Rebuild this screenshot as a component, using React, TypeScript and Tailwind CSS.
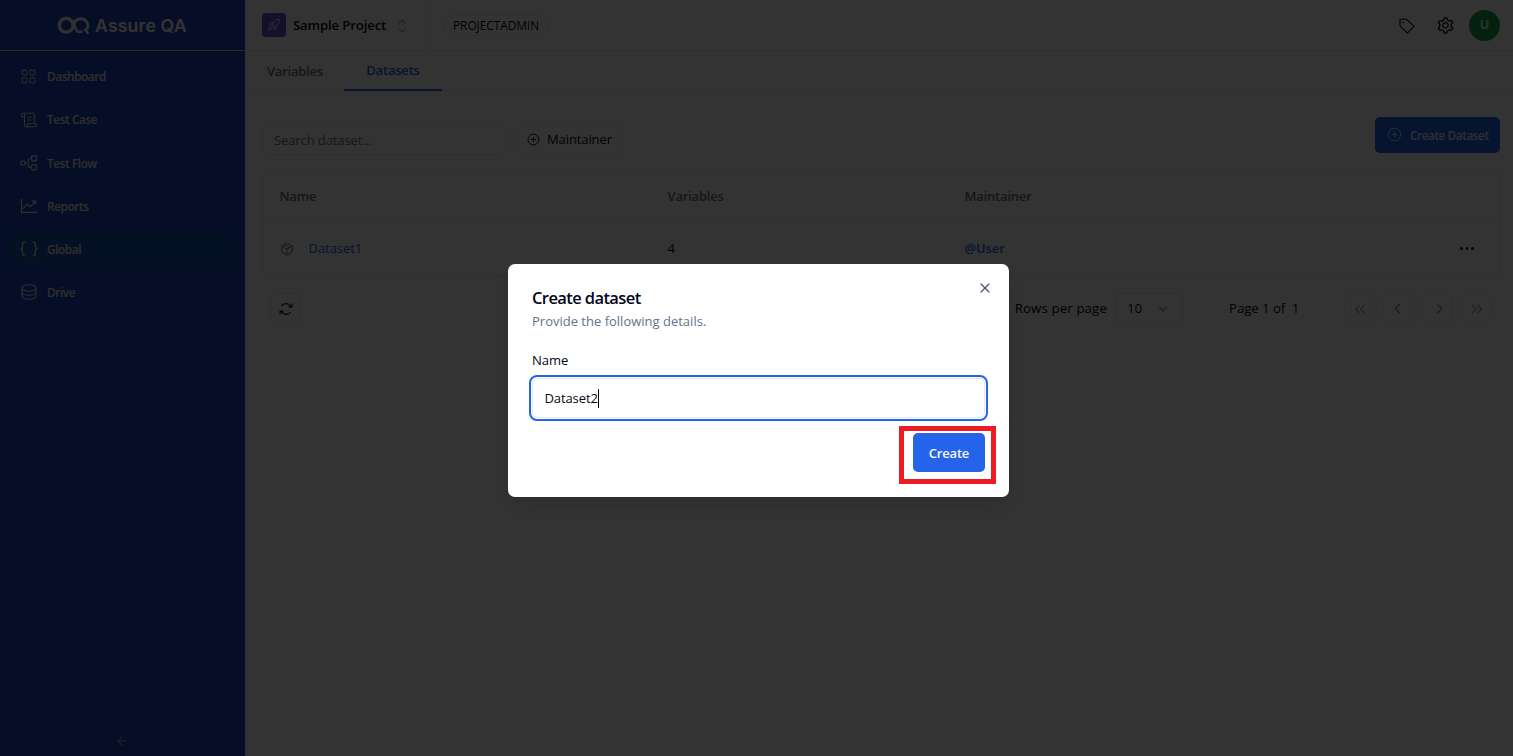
import type { ReactNode, SVGProps } from "react";
import {
  ArrowLeft,
  ChevronDown,
  ChevronLeft,
  ChevronRight,
  ChevronsLeft,
  ChevronsRight,
  CirclePlus,
  LayoutGrid,
  Package,
  Rocket,
  ScrollText,
  X,
} from "lucide-react";
import { AiOutlineSetting } from "react-icons/ai";

function FlowIcon(props: SVGProps<SVGSVGElement>) {
  return (
    <svg viewBox="0 0 18 16" fill="none" stroke="currentColor" strokeWidth="1.1" {...props}>
      <rect x="0.8" y="6" width="4" height="4" rx="0.6" />
      <rect x="11.6" y="0.9" width="5" height="5" rx="0.8" />
      <rect x="11.6" y="9.9" width="5" height="5" rx="0.8" />
      <path d="M4.8 8h3.4M11.6 3.4h-1.4a2 2 0 0 0-2 2v5a2 2 0 0 0 2 2h1.4" />
    </svg>
  );
}

function ChartIcon(props: SVGProps<SVGSVGElement>) {
  return (
    <svg viewBox="0 0 18 16" fill="none" stroke="currentColor" strokeWidth="1.2" {...props}>
      <path d="M1.5 1v13.3h15.3M3.2 10.5l4-4.6 3 3 5-5.8M11.600 3h3.900v3.800" />
    </svg>
  );
}

function BracesIcon(props: SVGProps<SVGSVGElement>) {
  return (
    <svg viewBox="0 0 20 16" fill="none" stroke="currentColor" strokeWidth="1.2" {...props}>
      <path d="M6.300 1.200H5.600a2 2 0 0 0-2 2v2.600c0 1.300-.7 2.200-2.200 2.200 1.500 0 2.200.9 2.200 2.200v2.600a2 2 0 0 0 2 2h.7M13.700 1.200h.7a2 2 0 0 1 2 2v2.600c0 1.300.7 2.200 2.200 2.200-1.500 0-2.200.9-2.200 2.200v2.600a2 2 0 0 1-2 2h-.7" />
    </svg>
  );
}

function StackIcon(props: SVGProps<SVGSVGElement>) {
  return (
    <svg viewBox="0 0 16 16" fill="none" stroke="currentColor" strokeWidth="1.1" {...props}>
      <ellipse cx="8" cy="4" rx="7" ry="3.200" />
      <path d="M1 4v8c0 1.800 3.100 3.200 7 3.200s7-1.400 7-3.200V4M1 8c0 1.800 3.100 3.200 7 3.200S15 9.800 15 8" />
    </svg>
  );
}

function TagIcon(props: SVGProps<SVGSVGElement>) {
  return (
    <svg viewBox="0 0 16 16" fill="none" stroke="currentColor" strokeWidth="1.1" strokeLinejoin="round" {...props}>
      <path d="M1 1.3h6.6l7.1 6.6a.6.6 0 0 1 0 .9l-5.9 5.9a.6.6 0 0 1-.9 0L1 7.9z" />
      <circle cx="4.2" cy="4.4" r="0.8" fill="currentColor" stroke="none" />
    </svg>
  );
}

function RefreshIcon(props: SVGProps<SVGSVGElement>) {
  return (
    <svg viewBox="0 0 14 14" fill="none" stroke="currentColor" strokeWidth="1.1" {...props}>
      <path d="M2.200 4C3.400 2.400 5 1.600 7 1.600c2 0 3.600.9 5 2.700M11.800 10c-1.200 1.600-2.800 2.400-4.800 2.400-2 0-3.600-.9-5-2.700" />
      <path d="M12.900 1.500v3.400H9.500M1.100 12.500V9.100h3.400" />
    </svg>
  );
}

function Logo() {
  return (
    <svg className="h-[19px] w-[33px]" viewBox="0 0 33 19" fill="none" stroke="#f0f0f0">
      <path d="M16.800 11.500A7.100 7.100 0 1 1 30.600 11.500 7.100 7.100 0 0 1 28 14.600" strokeWidth="2.800" />
      <circle cx="9.200" cy="9.200" r="6.900" strokeWidth="3.400" />
      <path d="M15.500 5c2 3.500 2.200 7 5 10.800M20 15.700h5.500M27.500 12.800l4 5" strokeWidth="2.600" />
    </svg>
  );
}

function NavItem({ icon, label, active }: { icon: ReactNode; label: string; active?: boolean }) {
  return (
    <div
      className={
        "flex h-[34.2px] items-center gap-[9px] rounded-md pl-[11px] text-[11.8px] font-semibold tracking-[-0.4px] text-[#e6e6e0] " +
        (active ? "bg-[#1758b8]" : "")
      }
    >
      <span className="flex w-[19px] items-center justify-center">{icon}</span>
      <span className="mt-px">{label}</span>
    </div>
  );
}

function PageButton({ children }: { children: ReactNode }) {
  return (
    <div className="flex size-[31px] items-center justify-center rounded-md border border-[#edf0f5] text-[#80838b]">
      {children}
    </div>
  );
}

function Sidebar() {
  return (
    <aside className="flex w-[245px] shrink-0 flex-col bg-[#1a48bf]">
      <div className="flex h-[51px] items-center border-b border-[#d8d8b0] pl-[57px] text-white">
        <Logo />
        <span className="ml-[5px] mt-[2px] font-['Inter'] text-[17.7px] font-semibold tracking-[0.15px]">Assure QA</span>
      </div>
      <nav className="flex grow flex-col gap-[9px] px-2 pt-[8.400px]">
        <NavItem icon={<LayoutGrid size={17} strokeWidth={1.4} />} label="Dashboard" />
        <NavItem icon={<ScrollText size={18} strokeWidth={1.4} />} label="Test Case" />
        <NavItem icon={<FlowIcon className="h-4 w-[18px]" />} label="Test Flow" />
        <NavItem icon={<ChartIcon className="h-4 w-[18px]" />} label="Reports" />
        <NavItem icon={<BracesIcon className="h-4 w-5 shrink-0" />} label="Global" active />
        <NavItem icon={<StackIcon className="size-4" />} label="Drive" />
      </nav>
      <div className="flex h-[30px] justify-center text-[#a8a8a8]">
        <ArrowLeft size={14} strokeWidth={1.8} className="mr-px mt-[8px]" />
      </div>
    </aside>
  );
}

function Header() {
  return (
    <header className="flex h-[51px] shrink-0 items-center border-b border-slate-200">
      <div className="flex h-full w-[181px] items-center border-r border-slate-200 pl-4">
        <span className="flex size-[24px] items-center justify-center rounded-[4px] bg-[#5b50d6] text-white">
          <Rocket size={14} strokeWidth={1.4} />
        </span>
        <span className="ml-[7px] mt-[2px] text-[13.2px] font-semibold tracking-[-0.15px]">Sample Project</span>
        <svg className="ml-[12px] mt-px h-[14px] w-2 text-[#666]" viewBox="0 0 8 14" fill="none" stroke="currentColor">
          <path d="M.8 4.400 4 1.200l3.200 3.200M.8 9.600 4 12.800l3.200-3.200" />
        </svg>
      </div>
      <div className="ml-4 mt-px flex h-[21px] items-center rounded-full border border-[#e8ebf0] px-[9px] text-[11.800px] font-medium tracking-[0px]">
        PROJECTADMIN
      </div>
      <div className="ml-auto flex items-center pr-[13px]">
        <TagIcon className="mt-px size-4" />
        <AiOutlineSetting size={19} className="ml-[21px]" />
        <span className="ml-[14px] flex size-[31px] items-center justify-center rounded-full bg-[#16a34a] text-[13px] font-bold text-slate-200">
          U
        </span>
      </div>
    </header>
  );
}

function Background() {
  return (
    <div className="flex h-full w-full">
      <Sidebar />
      <main className="flex grow flex-col border-l border-slate-200">
        <Header />
        <div className="flex h-[41px] shrink-0 items-center border-b border-slate-200 text-[13px] font-semibold text-slate-500">
          <div className="mt-[2px] w-[98px] text-center tracking-[-0.2px]">Variables</div>
          <div className="mb-px flex h-[40px] w-[98px] items-center justify-center border-b-2 border-[#2563eb] pt-[2px] tracking-[-0.2px] text-[#2563eb]">
            Datasets
          </div>
        </div>
        <div className="flex grow flex-col pl-4 pr-[13px] pt-[25px]">
          <div className="flex items-start">
            <div className="mt-[7px] flex h-[31px] w-[245px] items-center rounded-md border border-slate-200 px-[11px] pt-[2px] text-[13px] tracking-[-0.1px] text-slate-500">
              Search dataset...
            </div>
            <div className="ml-2 mt-[7px] flex h-[31px] w-[109px] items-center rounded-md border border-dashed border-slate-200 px-[11px] text-[13px] tracking-[-0.1px]">
              <CirclePlus size={13} strokeWidth={1.7} className="mr-[7px] shrink-0" />
              Maintainer
            </div>
            <div className="ml-auto flex h-[35.500px] w-[125px] items-center rounded-[5px] bg-[#2563eb] pl-3 text-[11.800px] font-semibold tracking-[-0.45px] text-slate-200">
              <CirclePlus size={15} strokeWidth={1.4} className="mr-2 shrink-0" />
              <span className="mt-[2px] whitespace-nowrap">Create Dataset</span>
            </div>
          </div>
          <div className="mt-[16px] h-[105px] rounded-md border border-slate-200 text-[13px]">
            <div className="grid h-[49px] grid-cols-[388px_297px_1fr] items-center border-b border-slate-200 pl-[16.500px] pt-[2px] font-semibold tracking-[-0.2px] text-slate-500">
              <span>Name</span>
              <span>Variables</span>
              <span>Maintainer</span>
            </div>
            <div className="grid h-[54px] grid-cols-[388px_297px_1fr_39px] items-center pl-[16.500px] pt-px">
              <span className="flex items-center tracking-[-0.05px] text-[#2563eb]">
                <Package size={14} strokeWidth={1.4} className="mr-[15px] text-slate-600" />
                Dataset1
              </span>
              <span>4</span>
              <span className="font-semibold tracking-[-0.1px] text-[#2563eb]">@User</span>
              <span className="flex gap-[3px]">
                <i className="size-[2.500px] rounded-full bg-black" />
                <i className="size-[2.500px] rounded-full bg-black" />
                <i className="size-[2.500px] rounded-full bg-black" />
              </span>
            </div>
          </div>
          <div className="mt-[17px] flex items-center px-2 text-[13.300px] font-medium tracking-[-0.05px]">
            <div className="flex size-[31px] items-center justify-center rounded-md border border-slate-200">
              <RefreshIcon className="size-[14px]" />
            </div>
            <span className="ml-auto mt-px tracking-[0.1px]">Rows per page</span>
            <div className="ml-2 flex h-[31px] w-[68px] items-center justify-between rounded-md border border-slate-200 pl-[11px] pr-3 pt-px font-normal">
              10
              <ChevronDown size={14} strokeWidth={1.8} className="text-slate-500" />
            </div>
            <span className="ml-[46px] mt-px w-[70px] whitespace-pre tracking-[-0.1px]">Page 1 of  1</span>
            <div className="ml-[45px] flex gap-2">
              <PageButton>
                <ChevronsLeft size={18} strokeWidth={1.4} />
              </PageButton>
              <PageButton>
                <ChevronLeft size={17} strokeWidth={1.6} className="-ml-[3px]" />
              </PageButton>
              <PageButton>
                <ChevronRight size={17} strokeWidth={1.6} className="ml-[3px]" />
              </PageButton>
              <PageButton>
                <ChevronsRight size={18} strokeWidth={1.4} />
              </PageButton>
            </div>
          </div>
        </div>
      </main>
    </div>
  );
}

function CreateDialog() {
  return (
    <div className="absolute left-[508px] top-[264px] h-[232.500px] w-[501px] rounded-[7px] bg-white px-6 pt-[22px] shadow-lg">
      <X size={16} strokeWidth={1.900} className="absolute right-[16px] top-[16px] text-slate-600" />
      <h2 className="text-[16.500px] font-semibold leading-6 tracking-[-0.6px]">Create dataset</h2>
      <p className="text-[13px] leading-[22px] tracking-[0px] text-slate-500">Provide the following details.</p>
      <label className="mt-[18px] block text-[13px] font-medium leading-5">Name</label>
      <div className="mt-2 flex h-[40px] items-center rounded-[5px] border border-slate-200 px-[11.500px] pt-px text-[13px] tracking-[-0.1px] outline-2 outline-offset-[1.500px] outline-[#2563eb]">
        Dataset2
        <span className="-mt-px h-[19px] w-px bg-black" />
      </div>
      <div className="mt-[15px] flex justify-end">
        <button className="h-[39px] w-[72px] rounded-[5px] bg-[#2563eb] pt-[2px] text-[13px] font-semibold tracking-[-0.2px] text-slate-50">
          Create
        </button>
      </div>
      <div className="absolute left-[391px] top-[162px] h-[58px] w-[97px] border-[5px] border-[#ed1c24]" />
    </div>
  );
}

export default function App() {
  return (
    <div className="relative h-[756px] w-[1513px] overflow-hidden bg-white font-['Open_Sans',sans-serif] text-slate-950">
      <Background />
      <div className="absolute inset-0 bg-black/80" />
      <CreateDialog />
    </div>
  );
}
